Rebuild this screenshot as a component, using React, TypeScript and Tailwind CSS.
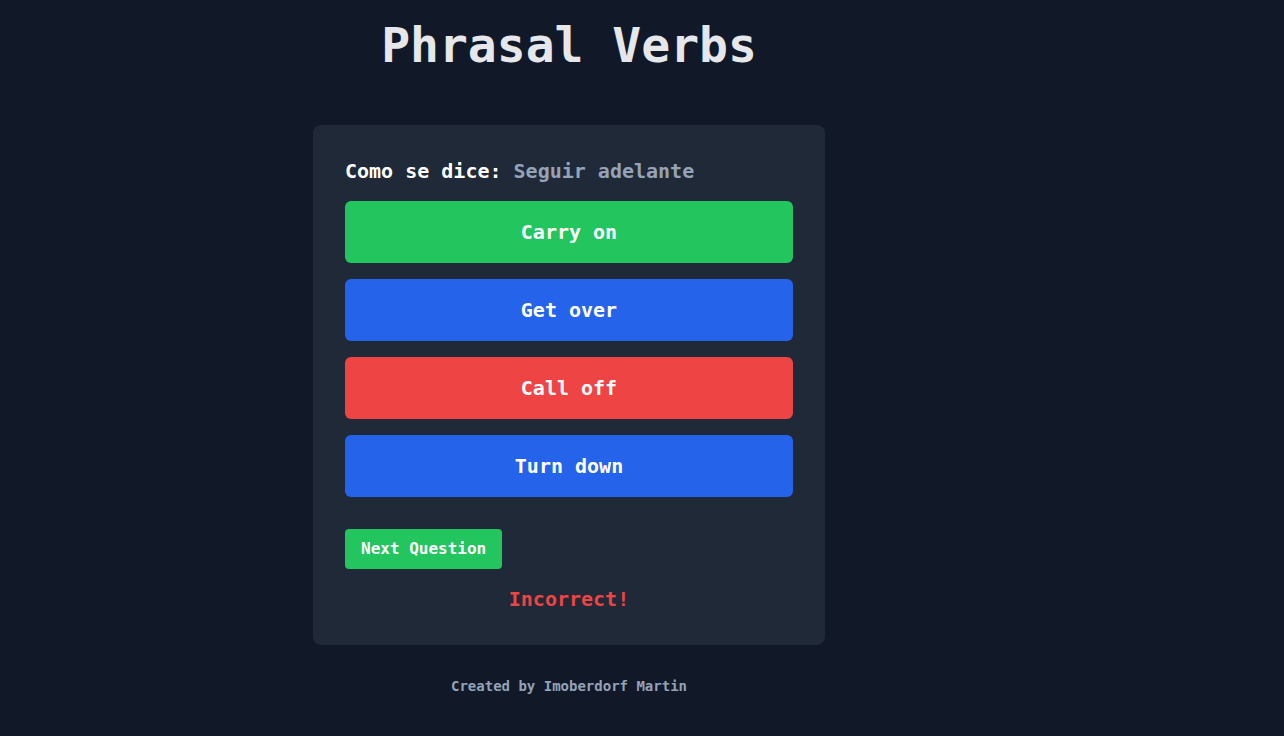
import React, { useState } from 'react';

const options = [
  { label: 'Carry on', color: 'bg-[#22c55e]' },
  { label: 'Get over', color: 'bg-[#2563eb]' },
  { label: 'Call off', color: 'bg-[#ef4444]' },
  { label: 'Turn down', color: 'bg-[#2563eb]' },
];

export default function App() {
  const [result] = useState('Incorrect!');

  return (
    <div
      className="min-h-screen bg-[#111827] text-white"
      style={{ fontFamily: '"DejaVu Sans Mono", "Liberation Mono", monospace' }}
    >
      <div className="ml-[313px] w-[512px] pt-[21px]">
        <h1 className="text-center text-5xl leading-none font-bold text-[#e5e7eb]">Phrasal Verbs</h1>

        <div className="mt-[56px] rounded-lg bg-[#1f2937] p-8">
          <p className="text-xl font-bold">
            Como se dice: <span className="text-[#94a3b8]">Seguir adelante</span>
          </p>

          <div className="mt-4 flex flex-col gap-4">
            {options.map((o) => (
              <button
                key={o.label}
                className={`flex h-[62px] w-full items-center justify-center rounded-md text-xl font-bold text-white ${o.color}`}
              >
                {o.label}
              </button>
            ))}
          </div>

          <button className="mt-8 rounded bg-[#22c55e] px-4 py-2 text-base font-bold text-white">
            Next Question
          </button>

          <p className="mt-4 text-center text-xl font-bold text-[#ef4444]">{result}</p>
        </div>

        <p className="mt-[31px] text-center text-sm font-bold text-[#94a3b8]">Created by Imoberdorf Martin</p>
      </div>
    </div>
  );
}
